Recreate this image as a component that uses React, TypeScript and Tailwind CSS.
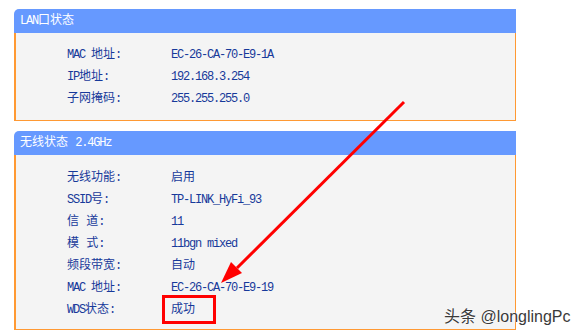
const cjk = '"Liberation Mono", "Noto Sans CJK SC", monospace'

// ASCII in the router page is narrow (6px per char), CJK is 12px
function M({ children }: { children: React.ReactNode }) {
  return <span className="text-[12px] tracking-[-1.2px]">{children}</span>
}

function Row({ label, value }: { label: React.ReactNode; value: React.ReactNode }) {
  return (
    <div className="flex h-[22px] items-center">
      <div className="w-[104px] shrink-0">{label}</div>
      <div className="relative">{value}</div>
    </div>
  )
}

function Panel({
  title,
  className,
  bodyClass,
  children,
}: {
  title: React.ReactNode
  className?: string
  bodyClass: string
  children: React.ReactNode
}) {
  return (
    <section className={'w-[502px] ' + (className ?? '')}>
      <div className="flex h-[24px] items-center rounded-tl-[5px] bg-[#6699ff] pl-[6px] text-[12px] text-white">
        {title}
      </div>
      <div
        className={
          'border-b border-l-2 border-r border-[#ff9933] bg-[#f4f4f4] pl-[51px] text-[12px] text-[#17399a] ' +
          bodyClass
        }
      >
        {children}
      </div>
    </section>
  )
}

export default function App() {
  return (
    <div className="relative h-[336px] w-[577px] overflow-hidden bg-white" style={{ fontFamily: cjk }}>
      <div className="pl-[14px] pt-[9px]">
        <Panel title={<span><M>LAN</M>口状态</span>} bodyClass="pt-[11px] pb-[10px]">
          <Row label={<span><M>MAC </M>地址<M>:</M></span>} value={<M>EC-26-CA-70-E9-1A</M>} />
          <Row label={<span><M>IP</M>地址<M>:</M></span>} value={<M>192.168.3.254</M>} />
          <Row label={<span>子网掩码<M>:</M></span>} value={<M>255.255.255.0</M>} />
        </Panel>

        <Panel
          title={<span>无线状态 <M>2.4GHz</M></span>}
          className="mt-[10px]"
          bodyClass="pt-[12px] pb-[8px]"
        >
          <Row label={<span>无线功能<M>:</M></span>} value="启用" />
          <Row label={<span><M>SSID</M>号<M>:</M></span>} value={<M>TP-LINK_HyFi_93</M>} />
          <Row label={<span>信 道<M>:</M></span>} value={<M>11</M>} />
          <Row label={<span>模 式<M>:</M></span>} value={<M>11bgn mixed</M>} />
          <Row label={<span>频段带宽<M>:</M></span>} value="自动" />
          <Row label={<span><M>MAC </M>地址<M>:</M></span>} value={<M>EC-26-CA-70-E9-19</M>} />
          <Row
            label={<span><M>WDS</M>状态<M>:</M></span>}
            value={
              <>
                成功
                <span className="absolute -left-[9px] -top-[6px] h-[29px] w-[54px] border-[3px] border-[#ff0000]" />
              </>
            }
          />
        </Panel>
      </div>

      {/* red annotation arrow */}
      <svg className="pointer-events-none absolute inset-0" width="577" height="336" viewBox="0 0 577 336">
        <line x1="404" y1="102" x2="237" y2="268" stroke="#ff0000" strokeWidth="3" />
        <polygon points="221,283 242,273 231,262" fill="#ff0000" />
      </svg>

      {/* watermark */}
      <div
        className="absolute left-[444px] top-[307px] whitespace-nowrap text-[16px] leading-[20px] text-[#3a3a3a] [text-shadow:0_0_2px_#fff,0_0_1px_#fff]"
        style={{ fontFamily: '"Liberation Sans", "Noto Sans CJK SC", sans-serif' }}
      >
        头条 @longlingPc
      </div>
    </div>
  )
}
